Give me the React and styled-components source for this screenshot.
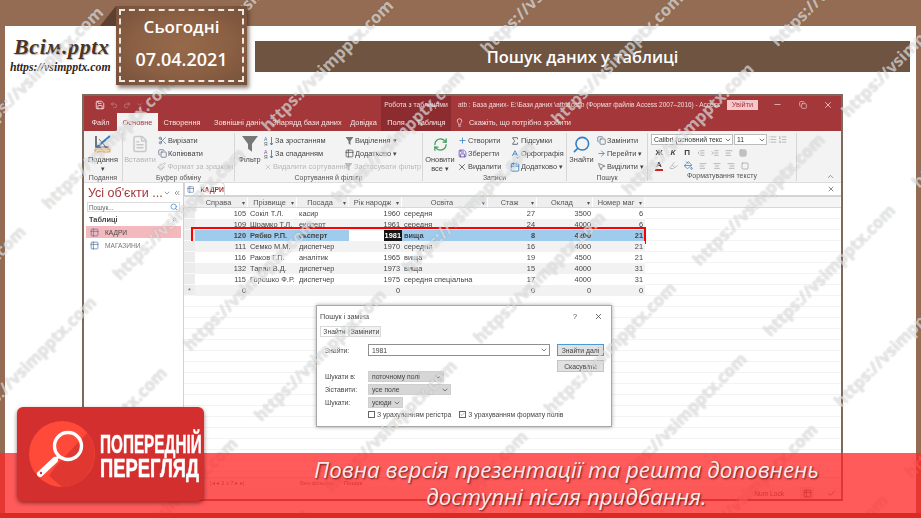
import React from 'react'
import styled, { createGlobalStyle } from 'styled-components'
import {
  Scissors, Copy, Paintbrush, Search, ArrowRight, MousePointer2, Sigma, SpellCheck, RefreshCw,
  Save, X, Undo2, Redo2, Minus, Lightbulb, ChevronDown, ChevronsLeft, ChevronsUp, Table2, Plus,
  Check, FileText, AlignLeft, AlignCenter, AlignRight, List, ListOrdered,
  IndentIncrease, IndentDecrease, Grid3x3, PaintBucket, Highlighter, Square, ChevronUp, Calendar,
} from 'lucide-react'

const GlobalStyle = createGlobalStyle`
  html, body { margin: 0; padding: 0; width: 921px; height: 518px; overflow: hidden; background: #936c53; }
  * { box-sizing: border-box; }
`

const Slide = styled.div`
  position: relative;
  width: 921px;
  height: 518px;
  overflow: hidden;
  background: #936c53;
  padding: 26px 5px 0;
  font-family: "Open Sans", sans-serif;
`
const Sheet = styled.div`
  height: 492px;
  background: #fff;
`
const Header = styled.div`
  display: flex;
  height: 68px;
`
const Logo = styled.div`
  width: 111px;
  padding: 8px 0 0 5px;
  display: flex;
  flex-direction: column;
  color: #4b3426;
`
const LogoName = styled.div`
  font: italic 700 22px/26px "Liberation Serif", serif;
  letter-spacing: 0.6px;
  padding-left: 4px;
  text-shadow: 1px 1px 1px rgba(0, 0, 0, 0.3);
`
const LogoUrl = styled.div`
  font: italic 700 11.8px/14px "Liberation Serif", serif;
  color: #33241a;
  white-space: nowrap;
`
const Badge = styled.div`
  position: relative;
  width: 131px;
  height: 79px;
  margin-top: -20px;
  z-index: 2;
  padding: 3px;
  background: radial-gradient(ellipse at center, #96694a 0%, #8a5f43 55%, #74503a 100%);
  box-shadow: 2px 3px 4px rgba(50, 30, 20, 0.55);
  &::before {
    content: '';
    position: absolute;
    left: -16px;
    top: 0;
    border-style: solid;
    border-width: 0 0 20px 16px;
    border-color: transparent transparent #5d4030 transparent;
  }
`
const BadgeInner = styled.div`
  height: 100%;
  border: 2px dashed #eee6e0;
  display: flex;
  flex-direction: column;
  align-items: center;
  gap: 8px;
  color: #fff;
  font-weight: 600;
  line-height: 24px;
  padding-top: 4px;
`
const BadgeText = styled.span`
  font-size: ${p => p.$size}px;
`
const TitleBand = styled.div`
  width: 655px;
  height: 31px;
  margin: 15px 0 0 8px;
  background: #6f5441;
  color: #fff;
  font-weight: 600;
  font-size: 16.4px;
  display: flex;
  align-items: center;
  justify-content: center;
`

const Win = styled.div`
  position: relative;
  width: 761px;
  height: 407px;
  margin-left: 77px;
  border: 2px solid #7d6a5c;
  border-bottom-color: #8c5a50;
  background: #fff;
  display: flex;
  flex-direction: column;
  font-family: "Liberation Sans", sans-serif;
  font-size: 7.4px;
  color: #333;
  filter: blur(0.3px);
`
const TitleBar = styled.div`
  height: 17px;
  background: #a4373a;
  color: #f3d9d9;
  display: flex;
  align-items: center;
  position: relative;
`
const Qat = styled.div`
  width: 297px;
  padding-left: 11px;
  display: flex;
  align-items: center;
  gap: 5px;
  color: #c98688;
`
const ContextLabel = styled.div`
  width: 70px;
  height: 17px;
  background: #8d2c30;
  display: flex;
  align-items: center;
  justify-content: center;
  white-space: nowrap;
  font-size: 6.8px;
`
const WinTitle = styled.div`
  padding-left: 7px;
  width: 276px;
  white-space: nowrap;
  font-size: 6.5px;
`
const SignIn = styled.div`
  width: 31px;
  height: 10px;
  background: #f6c7ca;
  color: #a4373a;
  display: flex;
  align-items: center;
  justify-content: center;
`
const WinControls = styled.div`
  flex: 1;
  padding: 0 8px 0 15px;
  display: flex;
  justify-content: space-between;
  align-items: center;
  color: #edcfcf;
`
const TabBar = styled.div`
  height: 18px;
  background: #a4373a;
  color: #f6e4e4;
  display: flex;
  align-items: stretch;
`
const Tab = styled.div`
  width: ${p => p.$w}px;
  display: flex;
  align-items: center;
  justify-content: center;
  white-space: nowrap;
  background: ${p => p.$active ? '#f3f3f3' : p.$context ? '#8d2c30' : 'transparent'};
  color: ${p => p.$active ? '#a4373a' : 'inherit'};
`
const TellMe = styled.div`
  display: flex;
  align-items: center;
  gap: 5px;
  padding-left: 4px;
`
const Ribbon = styled.div`
  height: 52px;
  background: #f3f3f3;
  display: flex;
  border-bottom: 1px solid #dcdcdc;
  position: relative;
`
const Group = styled.div`
  width: ${p => p.$w}px;
  border-right: 1px solid #d6d6d6;
  display: flex;
  flex-direction: column;
  margin: 2px 0 1px;
`
const GroupBody = styled.div`
  flex: 1;
  display: flex;
  padding-top: 1px;
`
const GroupLabel = styled.div`
  height: 10px;
  line-height: 10px;
  text-align: center;
  color: #555;
  font-size: 7px;
`
const Big = styled.div`
  width: ${p => p.$w}px;
  display: flex;
  flex-direction: column;
  align-items: center;
  text-align: center;
  line-height: 9px;
  color: ${p => p.$off ? '#b4b4b4' : '#444'};
`
const BigIcon = styled.div`
  height: 20px;
  display: flex;
  align-items: center;
  justify-content: center;
  margin-bottom: 1px;
  color: ${p => p.$c || 'inherit'};
`
const Stack = styled.div`
  width: ${p => p.$w}px;
  display: flex;
  flex-direction: column;
  gap: 0;
`
const Small = styled.div`
  height: 13px;
  display: flex;
  align-items: center;
  gap: 1px;
  white-space: nowrap;
  color: ${p => p.$off ? '#b8b8b8' : '#444'};
`
const SmallIcon = styled.span`
  width: 10px;
  display: inline-flex;
  justify-content: center;
  color: ${p => p.$c || '#5a6f8a'};
`
const FormatRows = styled.div`
  padding: 0 0 0 3px;
  display: flex;
  flex-direction: column;
  gap: 2px;
`
const ComboRow = styled.div`
  display: flex;
  align-items: center;
  gap: 1px;
  height: 11px;
`
const Combo = styled.div`
  width: ${p => p.$w}px;
  height: 11px;
  background: #fff;
  border: 1px solid #bcbcbc;
  padding-left: 2px;
  display: flex;
  align-items: center;
  justify-content: space-between;
  white-space: nowrap;
  overflow: hidden;
  font-size: 6.8px;
`
const IconRow = styled.div`
  display: flex;
  align-items: center;
  gap: 6px;
  height: 11px;
  padding-left: 4px;
  color: #999;
`
const Glyph = styled.span`
  width: 8px;
  text-align: center;
  font-weight: 700;
  font-size: 8px;
  font-style: ${p => p.$italic ? 'italic' : 'normal'};
  color: #444;
  border-bottom: ${p => p.$mark ? '2px solid #d41f1f' : 'none'};
  line-height: 8px;
`
const Collapse = styled.div`
  position: absolute;
  right: 6px;
  bottom: 1px;
  color: #777;
  display: flex;
`

const Body = styled.div`
  flex: 1;
  display: flex;
  min-height: 0;
`
const Nav = styled.div`
  width: 100px;
  border-right: 1px solid #d0d0d0;
  padding: 0 2px;
  display: flex;
  flex-direction: column;
`
const NavHead = styled.div`
  height: 19px;
  display: flex;
  align-items: center;
  justify-content: space-between;
  color: #a4373a;
  font-size: 12.5px;
  padding: 0 2px;
  white-space: nowrap;
`
const NavBtns = styled.div`
  display: flex;
  align-items: center;
  gap: 2px;
  color: #666;
`
const NavSearch = styled.div`
  height: 10px;
  border: 1px solid #dcdcdc;
  margin: 0 1px;
  display: flex;
  align-items: center;
  justify-content: space-between;
  padding: 0 1px;
  font-size: 6.4px;
  color: #666;
`
const NavSection = styled.div`
  height: 13px;
  margin-top: 1px;
  padding: 0 3px;
  display: flex;
  align-items: center;
  justify-content: space-between;
  font-weight: 700;
  color: #444;
`
const NavItem = styled.div`
  height: 12px;
  margin-bottom: 1px;
  padding-left: 4px;
  display: flex;
  align-items: center;
  gap: 6px;
  background: ${p => p.$active ? '#f4b9bd' : 'transparent'};
  color: ${p => p.$active ? '#444' : '#777'};
  font-size: 6.6px;
`
const Doc = styled.div`
  flex: 1;
  display: flex;
  flex-direction: column;
  min-width: 0;
`
const DocTabs = styled.div`
  height: 14px;
  border-bottom: 2px solid #d4d4d4;
  display: flex;
  align-items: flex-end;
  justify-content: space-between;
  padding-right: 6px;
`
const DocTab = styled.div`
  width: 41px;
  height: 13px;
  border: 1px solid #d4d4d4;
  border-bottom: none;
  border-radius: 0 5px 0 0;
  display: flex;
  align-items: center;
  gap: 6px;
  padding-left: 2px;
  color: #a4373a;
  font-weight: 700;
  font-size: 6.8px;
`
const DocClose = styled.div`
  color: #555;
  display: flex;
  align-self: center;
`
const Columns = '11px 53px 49px 52px 53px 86px 49px 56px 52px'
const HeadRow = styled.div`
  display: grid;
  grid-template-columns: ${Columns} 1fr;
  height: 11px;
  background: #eeeeee;
  border-bottom: 1px solid #d8d8d8;
`
const HeadCell = styled.div`
  position: relative;
  display: flex;
  align-items: center;
  justify-content: center;
  border-right: 1px solid #fff;
  padding-right: 5px;
  color: #555;
  white-space: nowrap;
  overflow: hidden;
  background: ${p => p.$blank ? '#f5f5f5' : 'transparent'};
  &::after {
    content: '${p => p.$blank ? '' : '▾'}';
    position: absolute;
    right: 2px;
    font-size: 6px;
  }
`
const Table = styled.div`
  flex: 1;
  background: repeating-linear-gradient(to bottom, #fff 0, #fff 10px, #f3f3f3 10px, #f3f3f3 11px);
  position: relative;
`
const Row = styled.div`
  position: relative;
  display: grid;
  grid-template-columns: ${Columns};
  width: 461px;
  height: 11px;
  background: ${p => p.$sel ? '#9fcbec' : p.$alt ? '#f2f2f2' : '#fff'};
  font-weight: ${p => p.$sel ? 700 : 400};
  ${p => p.$sel && `
    &::after {
      content: '';
      position: absolute;
      left: 7px;
      right: -1px;
      top: -3px;
      bottom: -3px;
      border: 2.5px solid #f00;
      pointer-events: none;
    }
  `}
`
const Cell = styled.div`
  display: flex;
  align-items: center;
  justify-content: ${p => p.$right ? 'flex-end' : 'flex-start'};
  padding: 0 2px;
  white-space: nowrap;
  overflow: hidden;
  color: #444;
  background: ${p => p.$blank ? '#fff' : 'transparent'};
`
const Selector = styled.div`
  background: #ececec;
  border-bottom: 1px solid #f9f9f9;
  display: flex;
  align-items: center;
  justify-content: center;
  color: #666;
`
const Picked = styled.span`
  background: #151515;
  color: #fff;
  margin-right: -2px;
  padding: 0 1px;
  line-height: 11px;
`
const RecordBar = styled.div`
  position: absolute;
  left: 0;
  right: 0;
  bottom: 0;
  height: 10px;
  background: #f5f5f5;
  border-top: 1px solid #e0e0e0;
  display: flex;
  align-items: center;
  padding-left: 26px;
  font-size: 6px;
  color: #777;
`
const RecordNav = styled.span`
  width: 90px;
  white-space: nowrap;
`
const RecordNote = styled.span`
  width: ${p => p.$w}px;
  white-space: nowrap;
  color: ${p => p.$c || 'inherit'};
`
const StatusBar = styled.div`
  height: 12px;
  background: #f1f1f1;
  display: flex;
  align-items: center;
  justify-content: flex-end;
  gap: 10px;
  padding-right: 3px;
  font-size: 6.6px;
  color: #555;
`
const StatusCell = styled.span`
  width: 14px;
  height: 12px;
  display: inline-flex;
  align-items: center;
  justify-content: center;
  background: ${p => p.$on ? '#e2e2e2' : 'transparent'};
`
const NumLock = styled.span`
  margin-right: 6px;
`

const Dialog = styled.div`
  position: absolute;
  left: 232px;
  top: 209px;
  width: 296px;
  height: 122px;
  background: #fff;
  border: 1px solid #a8a8a8;
  box-shadow: 0 0 4px rgba(0, 0, 0, 0.35);
  padding: 3px 8px 0 3px;
  color: #444;
  font-size: 6.8px;
`
const DialogHead = styled.div`
  height: 14px;
  display: flex;
  align-items: center;
  justify-content: space-between;
  font-size: 7.2px;
`
const DialogBtns = styled.div`
  display: flex;
  align-items: center;
  gap: 17px;
  color: #444;
`
const DialogTabs = styled.div`
  display: flex;
  margin-top: 3px;
  height: 11px;
`
const DialogTab = styled.div`
  width: ${p => p.$w}px;
  display: flex;
  align-items: center;
  justify-content: center;
  background: ${p => p.$on ? '#fff' : '#f0f0f0'};
  border: 1px solid #dadada;
`
const FormRow = styled.div`
  display: grid;
  grid-template-columns: 43px 182px 1fr;
  align-items: center;
  margin-top: ${p => p.$gap || 0}px;
  height: ${p => p.$h || 12}px;
  padding-left: 5px;
`
const Field = styled.div`
  width: ${p => p.$w}px;
  height: ${p => p.$h || 11}px;
  background: ${p => p.$gray ? '#d6d6d6' : '#fff'};
  border: 1px solid ${p => p.$gray ? '#cfcfcf' : '#8e8e8e'};
  display: flex;
  align-items: center;
  justify-content: space-between;
  padding: 0 1px 0 3px;
  white-space: nowrap;
`
const DlgButton = styled.div`
  width: 47px;
  height: 12px;
  background: #e1e1e1;
  border: 1px solid ${p => p.$primary ? '#4a9ad8' : '#c4c4c4'};
  display: flex;
  align-items: center;
  justify-content: center;
  margin-left: 7px;
  white-space: nowrap;
`
const Checks = styled.div`
  display: flex;
  align-items: center;
  margin: 2px 0 0 48px;
  white-space: nowrap;
  gap: 8px;
`
const CheckLabel = styled.div`
  display: flex;
  align-items: center;
  gap: 2px;
`
const Box = styled.div`
  width: 7px;
  height: 7px;
  border: 1px solid #666;
  display: flex;
  align-items: center;
  justify-content: center;
`

const WatermarkLayer = styled.div`
  position: absolute;
  inset: 0;
  overflow: hidden;
  pointer-events: none;
`
const WatermarkSheet = styled.div`
  position: absolute;
  left: 460px;
  top: 259px;
  width: 0;
  height: 0;
  transform: rotate(-45deg);
`
const WatermarkRows = styled.div`
  position: absolute;
  left: -676px;
  top: -547px;
  display: flex;
  flex-direction: column;
  gap: 68px;
`
const WatermarkRow = styled.div`
  display: flex;
`
const Mark = styled.span`
  flex: 0 0 210px;
  font: 700 16.5px/32px "Open Sans", sans-serif;
  white-space: nowrap;
  color: rgba(255, 255, 255, 0.55);
  text-shadow: 0 0 1.5px rgba(100, 100, 100, 0.4);
`

const Band = styled.div`
  position: absolute;
  left: 0;
  right: 0;
  bottom: 0;
  height: 65px;
  background: rgba(255, 40, 40, 0.76);
  border-bottom: 5px solid #d92b22;
  display: flex;
  flex-direction: column;
  align-items: center;
  padding: 3px 0 0 212px;
  color: #fbeaea;
  font: italic 400 22.3px/27px "Open Sans", sans-serif;
  text-shadow: 1px 1px 2px rgba(60, 0, 0, 0.75);
  white-space: nowrap;
`
const Promo = styled.div`
  position: absolute;
  left: 17px;
  top: 407px;
  width: 187px;
  height: 94px;
  background: #d32f2f;
  border-radius: 6px;
  box-shadow: 0 2px 4px rgba(60, 0, 0, 0.55);
  display: flex;
  align-items: center;
  gap: 5px;
  padding-left: 12px;
  & > svg { flex-shrink: 0; }
`
const PromoText = styled.div`
  color: #fff;
  margin-top: 4px;
  font: 700 25.5px/24px "Liberation Sans", sans-serif;
  -webkit-text-stroke: 0.5px #fff;
  white-space: nowrap;
`
const PromoLine = styled.div`
  transform: scaleX(${p => p.$scale});
  transform-origin: left center;
`

const Loupe = () => (
  <svg width="66" height="68" viewBox="0 0 66 68">
    <circle cx="33" cy="34" r="33" fill="#ff4a3a" />
    <path d="M26 47 L58 13 A33 33 0 0 1 33 67 L20 56 Z" fill="#c72a2a" opacity="0.55" />
    <circle cx="39" cy="26" r="13.5" fill="none" stroke="#fff" strokeWidth="3.4" />
    <path d="M30 36 L25 41" stroke="#fff" strokeWidth="3" />
    <path d="M26 40 L11 54" stroke="#fff" strokeWidth="6" strokeLinecap="round" />
    <circle cx="12" cy="53" r="1.2" fill="#d32f2f" />
  </svg>
)

const ViewIcon = () => (
  <svg width="22" height="20" viewBox="0 0 22 20">
    <path d="M4 2 L4 13 L17 13" fill="none" stroke="#555" strokeWidth="1.6" />
    <path d="M5 13 L18 2" stroke="#2f7fc4" strokeWidth="2.2" />
    <path d="M7 5 L13 12" stroke="#777" strokeWidth="1" />
    <rect x="3" y="15" width="15" height="3" fill="#fbd9a8" stroke="#e0892a" strokeWidth="0.7" />
  </svg>
)

const Funnel = ({ size = 18 }) => (
  <svg width={size} height={size * 1.1} viewBox="0 0 18 20">
    <path d="M1 2 H17 L11 10 V18 L7 15 V10 Z" fill="currentColor" />
  </svg>
)

const SortIcon = ({ color }) => (
  <svg width="10" height="10" viewBox="0 0 10 10">
    <text x="0" y="4.5" fontSize="5" fill={color} fontFamily="Liberation Sans">А</text>
    <text x="0" y="9.5" fontSize="5" fill="#555" fontFamily="Liberation Sans">Я</text>
    <path d="M7.5 1 V9 M6 7 L7.5 9 L9 7" stroke="#3a6ea5" strokeWidth="0.8" fill="none" />
  </svg>
)

const rows = [
  ['105', 'Сокіл Т.Л.', 'касир', '1960', 'середня', '27', '3500', '6'],
  ['109', 'Шрамко Т.Л.', 'експерт', '1961', 'середня', '24', '4000', '6'],
  ['120', 'Рябко Р.П.', 'експерт', '1981', 'вища', '8', '4200', '21'],
  ['111', 'Семко М.М.', 'диспетчер', '1970', 'середня', '16', '4000', '21'],
  ['116', 'Раков Г.П.', 'аналітик', '1965', 'вища', '19', '4500', '21'],
  ['132', 'Таран В.Д.', 'диспетчер', '1973', 'вища', '15', '4000', '31'],
  ['115', 'Горошко Ф.Р.', 'диспетчер', '1975', 'середня спеціальна', '17', '4000', '31'],
  ['0', '', '', '0', '', '0', '0', '0'],
]
const heads = ['Справа', 'Прізвище', 'Посада', 'Рік народж', 'Освіта', 'Стаж', 'Оклад', 'Номер маг']

const isRight = i => [0, 3, 5, 6, 7].includes(i)

const Access = () => (
  <Win>
    <TitleBar>
      <Qat>
        <Save size={10} color="#f7eaea" />
        <Undo2 size={8} />
        <Redo2 size={8} />
        <ChevronDown size={7} />
      </Qat>
      <ContextLabel>Робота з таблицями</ContextLabel>
      <WinTitle>atb : База даних- E:\Бази даних \atb.accdb (Формат файлів Access 2007–2016)  -  Access</WinTitle>
      <SignIn>Увійти</SignIn>
      <WinControls>
        <Minus size={9} />
        <Copy size={8} />
        <X size={10} />
      </WinControls>
    </TitleBar>
    <TabBar>
      <Tab $w={33}>Файл</Tab>
      <Tab $w={41} $active>Основне</Tab>
      <Tab $w={48}>Створення</Tab>
      <Tab $w={62}>Зовнішні дані</Tab>
      <Tab $w={78}>Знарядд бази даних</Tab>
      <Tab $w={35}>Довідка</Tab>
      <Tab $w={30} $context>Поля</Tab>
      <Tab $w={40} $context>Таблиця</Tab>
      <TellMe>
        <Lightbulb size={9} />
        Скажіть, що потрібно зробити
      </TellMe>
    </TabBar>
    <Ribbon>
      <Group $w={39}>
        <GroupBody>
          <Big $w={38}>
            <BigIcon><ViewIcon /></BigIcon>
            Подання
            <span>▾</span>
          </Big>
        </GroupBody>
        <GroupLabel>Подання</GroupLabel>
      </Group>
      <Group $w={112}>
        <GroupBody>
          <Big $w={34} $off>
            <BigIcon><FileText size={18} color="#c8c8c8" /></BigIcon>
            Вставити
          </Big>
          <Stack $w={76}>
            <Small><SmallIcon><Scissors size={9} /></SmallIcon>Вирізати</Small>
            <Small><SmallIcon><Copy size={9} /></SmallIcon>Копіювати</Small>
            <Small $off><SmallIcon $c="#bbb"><Paintbrush size={9} /></SmallIcon>Формат за зразком</Small>
          </Stack>
        </GroupBody>
        <GroupLabel>Буфер обміну</GroupLabel>
      </Group>
      <Group $w={188}>
        <GroupBody>
          <Big $w={29}>
            <BigIcon $c="#777"><Funnel /></BigIcon>
            Фільтр
          </Big>
          <Stack $w={80}>
            <Small><SmallIcon><SortIcon color="#3a6ea5" /></SmallIcon>За зростанням</Small>
            <Small><SmallIcon><SortIcon color="#7a3fa5" /></SmallIcon>За спаданням</Small>
            <Small $off><SmallIcon $c="#bbb"><X size={8} /></SmallIcon>Видалити сортування</Small>
          </Stack>
          <Stack $w={76}>
            <Small><SmallIcon $c="#777"><Funnel size={9} /></SmallIcon>Виділення ▾</Small>
            <Small><SmallIcon $c="#555"><Table2 size={9} /></SmallIcon>Додатково ▾</Small>
            <Small $off><SmallIcon $c="#bbb"><Funnel size={9} /></SmallIcon>Застосувати фільтр</Small>
          </Stack>
        </GroupBody>
        <GroupLabel>Сортування й фільтр</GroupLabel>
      </Group>
      <Group $w={144}>
        <GroupBody>
          <Big $w={34}>
            <BigIcon><RefreshCw size={15} color="#3f9a58" /></BigIcon>
            Оновити<br />все ▾
          </Big>
          <Stack $w={53}>
            <Small><SmallIcon $c="#2f7fc4"><Plus size={9} /></SmallIcon>Створити</Small>
            <Small><SmallIcon $c="#5a3fa5"><Save size={9} /></SmallIcon>Зберегти</Small>
            <Small><SmallIcon $c="#555"><X size={10} /></SmallIcon>Видалити</Small>
          </Stack>
          <Stack $w={56}>
            <Small><SmallIcon $c="#555"><Sigma size={10} /></SmallIcon>Підсумки</Small>
            <Small><SmallIcon $c="#2f7fc4"><SpellCheck size={10} /></SmallIcon>Орфографія</Small>
            <Small><SmallIcon $c="#2f7fc4"><Calendar size={10} /></SmallIcon>Додатково ▾</Small>
          </Stack>
        </GroupBody>
        <GroupLabel>Записи</GroupLabel>
      </Group>
      <Group $w={81}>
        <GroupBody>
          <Big $w={29}>
            <BigIcon><Search size={19} color="#2f7fc4" style={{ transform: 'scaleX(-1)' }} /></BigIcon>
            Знайти
          </Big>
          <Stack $w={50}>
            <Small><SmallIcon><Copy size={9} /></SmallIcon>Замінити</Small>
            <Small><SmallIcon $c="#2f7fc4"><ArrowRight size={9} /></SmallIcon>Перейти ▾</Small>
            <Small><SmallIcon $c="#666"><MousePointer2 size={9} /></SmallIcon>Виділити ▾</Small>
          </Stack>
        </GroupBody>
        <GroupLabel>Пошук</GroupLabel>
      </Group>
      <Group $w={149}>
        <GroupBody>
          <FormatRows>
            <ComboRow>
              <Combo $w={82}>Calibri (основний текс <ChevronDown size={8} /></Combo>
              <Combo $w={33}>11 <ChevronDown size={8} /></Combo>
              <List size={9} color="#aaa" />
              <ListOrdered size={9} color="#aaa" />
            </ComboRow>
            <IconRow>
              <Glyph>Ж</Glyph>
              <Glyph $italic>К</Glyph>
              <Glyph>П</Glyph>
              <IndentDecrease size={8} />
              <IndentIncrease size={8} />
              <AlignLeft size={8} />
              <Grid3x3 size={8} />
            </IconRow>
            <IconRow>
              <Glyph $mark>А</Glyph>
              <Highlighter size={9} color="#aaa" />
              <PaintBucket size={9} color="#2f7fc4" />
              <AlignLeft size={8} />
              <AlignCenter size={8} />
              <AlignRight size={8} />
              <Square size={8} />
            </IconRow>
          </FormatRows>
        </GroupBody>
        <GroupLabel>Форматування тексту</GroupLabel>
      </Group>
      <Collapse><ChevronUp size={9} /></Collapse>
    </Ribbon>
    <Body>
      <Nav>
        <NavHead>
          Усі об'єкти ...
          <NavBtns>
            <ChevronDown size={8} />
            <ChevronsLeft size={8} />
          </NavBtns>
        </NavHead>
        <NavSearch>
          Пошук...
          <Search size={8} color="#2f7fc4" />
        </NavSearch>
        <NavSection>Таблиці <ChevronsUp size={7} /></NavSection>
        <NavItem $active><Table2 size={9} color="#5a7ba8" />КАДРИ</NavItem>
        <NavItem><Table2 size={9} color="#5a7ba8" />МАГАЗИНИ</NavItem>
      </Nav>
      <Doc>
        <DocTabs>
          <DocTab><Table2 size={9} color="#5a7ba8" />КАДРИ</DocTab>
          <DocClose><X size={8} /></DocClose>
        </DocTabs>
        <HeadRow>
          <HeadCell $blank />
          {heads.map(h => <HeadCell key={h}>{h}</HeadCell>)}
          <HeadCell $blank />
        </HeadRow>
        <Table>
          {rows.map((r, i) => (
            <Row key={i} $alt={i % 2 === 1} $sel={i === 2}>
              <Selector>{i === 7 ? '*' : ''}</Selector>
              {r.map((v, j) => (
                <Cell key={j} $right={isRight(j)} $blank={i === 2 && j === 3}>
                  {i === 2 && j === 3 ? <Picked>{v}</Picked> : v}
                </Cell>
              ))}
            </Row>
          ))}
          <RecordBar>
            <RecordNav>|◂ ◂ 3 з 7 ▸ ▸|</RecordNav>
            <RecordNote $w={44}>Без фільтра</RecordNote>
            <RecordNote $w={30} $c="#8a3a3a">Пошук</RecordNote>
          </RecordBar>
        </Table>
      </Doc>
    </Body>
    <StatusBar>
      <NumLock>Num Lock</NumLock>
      <StatusCell $on><Table2 size={9} /></StatusCell>
      <StatusCell><Check size={9} /></StatusCell>
    </StatusBar>
    <Dialog>
      <DialogHead>
        Пошук і заміна
        <DialogBtns>? <X size={9} /></DialogBtns>
      </DialogHead>
      <DialogTabs>
        <DialogTab $w={29} $on>Знайти</DialogTab>
        <DialogTab $w={32}>Замінити</DialogTab>
      </DialogTabs>
      <FormRow $gap={7} $h={12}>
        <span>Знайти:</span>
        <Field $w={182} $h={12}>1981 <ChevronDown size={8} /></Field>
        <DlgButton $primary>Знайти далі</DlgButton>
      </FormRow>
      <FormRow $gap={4} $h={12}>
        <span />
        <span />
        <DlgButton>Скасувати</DlgButton>
      </FormRow>
      <FormRow $gap={-2} $h={13}>
        <span>Шукати в:</span>
        <Field $w={76} $gray>поточному полі <ChevronDown size={8} /></Field>
      </FormRow>
      <FormRow $h={13}>
        <span>Зіставити:</span>
        <Field $w={83} $gray>усе поле <ChevronDown size={8} /></Field>
      </FormRow>
      <FormRow $h={13}>
        <span>Шукати:</span>
        <Field $w={35} $gray>усюди <ChevronDown size={8} /></Field>
      </FormRow>
      <Checks>
        <CheckLabel><Box />З урахуванням регістра</CheckLabel>
        <CheckLabel><Box><Check size={7} /></Box>З урахуванням формату полів</CheckLabel>
      </Checks>
    </Dialog>
  </Win>
)

const App = () => (
  <Slide>
    <GlobalStyle />
    <Sheet>
      <Header>
        <Logo>
          <LogoName>Всім.pptx</LogoName>
          <LogoUrl>https://vsimpptx.com</LogoUrl>
        </Logo>
        <Badge>
          <BadgeInner>
            <BadgeText $size={17}>Сьогодні</BadgeText>
            <BadgeText $size={18}>07.04.2021</BadgeText>
          </BadgeInner>
        </Badge>
        <TitleBand>Пошук даних у таблиці</TitleBand>
      </Header>
      <Access />
    </Sheet>
    <WatermarkLayer>
      <WatermarkSheet>
        <WatermarkRows>
          {Array.from({ length: 12 }).map((_, i) => (
            <WatermarkRow key={i}>
              {Array.from({ length: 7 }).map((_, j) => <Mark key={j}>https://vsimpptx.com</Mark>)}
            </WatermarkRow>
          ))}
        </WatermarkRows>
      </WatermarkSheet>
    </WatermarkLayer>
    <Band>
      <span>Повна версія презентації та решта доповнень</span>
      <span>доступні після придбання.</span>
    </Band>
    <Promo>
      <Loupe />
      <PromoText>
        <PromoLine $scale={0.6}>ПОПЕРЕДНІЙ</PromoLine>
        <PromoLine $scale={0.72}>ПЕРЕГЛЯД</PromoLine>
      </PromoText>
    </Promo>
  </Slide>
)

export default App
